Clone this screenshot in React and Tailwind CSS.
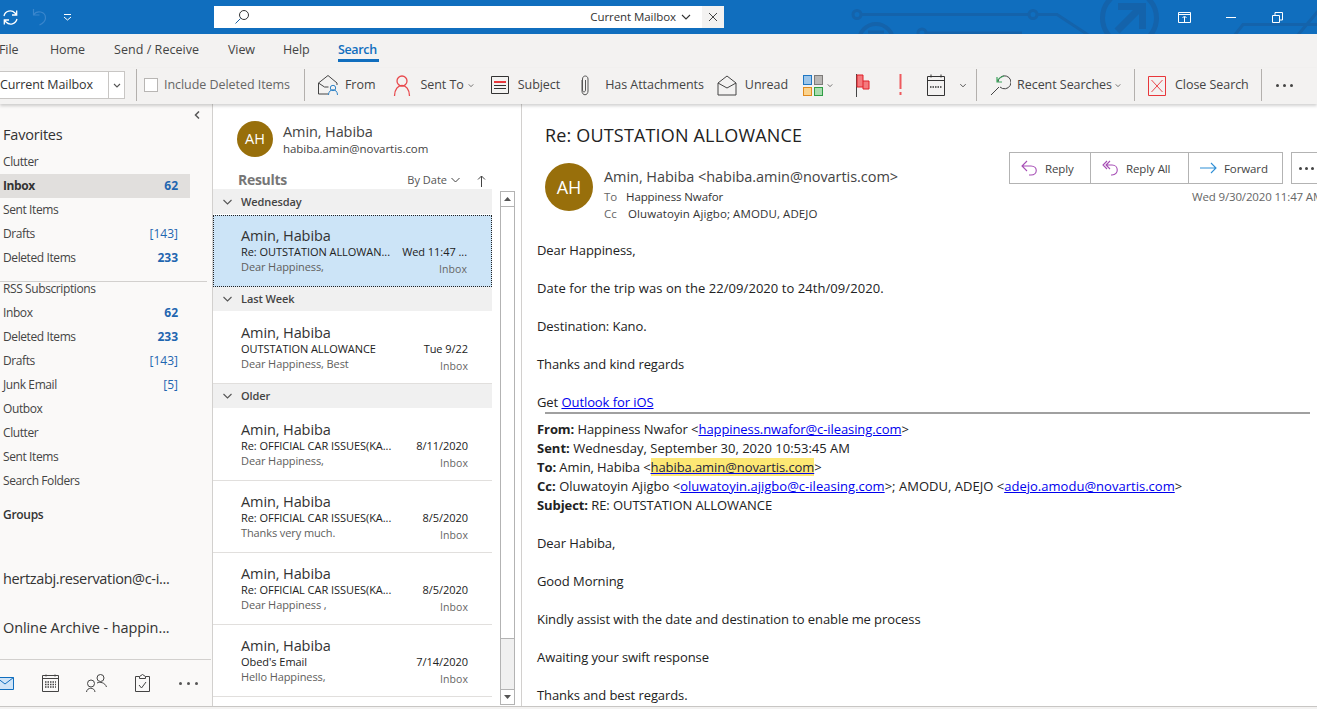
import React from "react";

const F = { fontFamily: '"Open Sans","Noto Sans",sans-serif' };

function Sep() {
  return <div className="w-px h-[32px] bg-[#b3b0ad] shrink-0" />;
}
function Chev({ className = "" }) {
  return (
    <svg width="8" height="5" viewBox="0 0 8 5" className={className} fill="none" stroke="#555" strokeWidth="1.1">
      <path d="M1 1l3 3 3-3" />
    </svg>
  );
}
function RibbonLabel({ children, className = "" }) {
  return <span className={"text-[12.5px] tracking-[-0.05px] text-[#444] whitespace-nowrap " + className}>{children}</span>;
}

function TitleBar() {
  return (
    <div className="relative h-[34px] bg-[#106ebe] flex items-center shrink-0 overflow-hidden">
      <svg className="absolute inset-0" width="1317" height="34" fill="none" stroke="#1463ab" strokeWidth="3">
        <circle cx="857" cy="14.500" r="4" />
        <path d="M861 14.500h168" />
        <circle cx="1033" cy="14.500" r="4" />
        <path d="M1037 14.500h20l32 21" />
        <circle cx="1129.500" cy="18" r="27" strokeWidth="5" />
        <path d="M1117 31l24-24M1118 6.500h24.500V29" strokeWidth="7" />
        <circle cx="876" cy="41" r="17" strokeWidth="4" />
        <path d="M868 32h16" strokeWidth="3" />
        <circle cx="922" cy="33" r="4" />
        <path d="M926 33h96" strokeWidth="3" />
        <path d="M1234 36l9-11.500h74M1297 36l22-26" />
      </svg>
      <svg className="ml-[2px] relative" width="17" height="17" viewBox="0 0 17 17" fill="none" stroke="#fff" strokeWidth="1.3">
        <path d="M2 7a6.500 6.500 0 0 1 11-3l1.500 1.500M15 10a6.500 6.500 0 0 1-11 3l-1.500-1.500M14.700 1.500V6H10M2.300 15.500V11H7" />
      </svg>
      <svg className="ml-[13px] relative" width="15" height="18" viewBox="0 0 15 18" fill="none" stroke="#3a86cc" strokeWidth="1.200">
        <path d="M1.500 1v6h6M1.500 7c3-5 12-4 12 3 0 3-2 5-6 7" />
      </svg>
      <svg className="ml-[16px] relative" width="9" height="7" viewBox="0 0 9 7" fill="none" stroke="#fff" strokeWidth="1">
        <path d="M1 .5h7M1 3l3.500 3L8 3" />
      </svg>
      <div className="relative ml-[142px] w-[510px] h-[22px] bg-white flex items-center">
        <svg className="ml-[20px]" width="16" height="16" viewBox="0 0 16 16" fill="none" stroke="#333" strokeWidth="1">
          <circle cx="10" cy="6" r="4.500" />
          <path d="M6.500 9.500L1.500 14.500" stroke="#1d5f9e" />
        </svg>
        <span className="ml-auto text-[11.5px] tracking-[-0.07px] text-[#333]">Current Mailbox</span>
        <svg className="ml-[5px] mr-[11px]" width="10" height="6" viewBox="0 0 10 6" fill="none" stroke="#333" strokeWidth="1.100">
          <path d="M1 1l4 4 4-4" />
        </svg>
        <div className="w-[22px] h-[22px] bg-[#f3f2f1] flex items-center justify-center">
          <svg width="10" height="10" viewBox="0 0 10 10" stroke="#444" strokeWidth="1">
            <path d="M1 1l8 8M9 1l-8 8" />
          </svg>
        </div>
      </div>
      <div className="relative ml-auto flex items-center mr-[34px]">
        <svg width="14" height="11" viewBox="0 0 14 11" fill="none" stroke="#fff" strokeWidth="1">
          <path d="M.5.500h12v10H.5zM.5 2.500h12M6.500 10V5M4.500 6l2-2 2 2" />
        </svg>
        <div className="ml-[34px] w-[10px] h-px bg-white" />
        <svg className="ml-[36px]" width="11" height="11" viewBox="0 0 11 11" fill="none" stroke="#fff" strokeWidth="1">
          <path d="M.5 3.500h7v7h-7zM3 3V.5h7.500v7.500H8" />
        </svg>
      </div>
    </div>
  );
}

function Tabs() {
  return (
    <div className="h-[34px] flex items-start pt-[7px] text-[12.500px] tracking-[-0.1px] text-[#444] shrink-0 -ml-[1px]">
      <span className="w-[51px]">File</span>
      <span className="w-[64px]">Home</span>
      <span className="w-[114px] tracking-[0.05px]">Send / Receive</span>
      <span className="w-[55px]">View</span>
      <span className="w-[55px]">Help</span>
      <span className="text-[#106ebe] border-b-[3px] border-[#106ebe] h-[21px] w-[41px] font-semibold tracking-[-0.35px] leading-[17px]">Search</span>
    </div>
  );
}

function Ribbon() {
  return (
    <div className="h-[36px] flex items-center shrink-0 shadow-[0_2px_3px_rgba(0,0,0,0.18)] relative z-10 bg-[#f3f2f1] pb-[2px]">
      <div className="w-[125px] h-[28px] bg-white border border-[#c8c6c4] border-l-0 flex items-center shrink-0">
        <span className="text-[12.500px] tracking-[-0.1px] text-[#333] flex-1 whitespace-nowrap overflow-hidden">Current Mailbox</span>
        <div className="w-[16px] h-full border-l border-[#c8c6c4] flex items-center justify-center">
          <Chev />
        </div>
      </div>
      <div className="ml-[11px]"><Sep /></div>
      <div className="ml-[7px] w-[14px] h-[14px] bg-white border border-[#b8b6b4]" />
      <RibbonLabel className="ml-[6px] text-[#666]">Include Deleted Items</RibbonLabel>
      <div className="ml-[14px]"><Sep /></div>
      <svg className="ml-[13px]" width="21" height="22" viewBox="0 0 21 22" fill="none" stroke="#444" strokeWidth="1">
        <path d="M.5 9L10 1.500l9 7.500M.5 9v11h10M19 9v2M.5 9l6 4h4" />
        <circle cx="15" cy="14" r="2.700" stroke="#2f83c7" />
        <path d="M10.500 21c0-7 9-7 9 0" stroke="#2f83c7" />
      </svg>
      <RibbonLabel className="ml-[6px]">From</RibbonLabel>
      <svg className="ml-[18px]" width="18" height="23" viewBox="0 0 18 23" fill="none" stroke="#e8494d" strokeWidth="1.300">
        <circle cx="9" cy="7" r="5" />
        <path d="M1.500 22c0-14 15-14 15 0" />
      </svg>
      <RibbonLabel className="ml-[9px]">Sent To</RibbonLabel>
      <Chev className="ml-[3px] scale-75" />
      <svg className="ml-[16px]" width="19" height="19" viewBox="0 0 19 19" fill="none" stroke="#333" strokeWidth="1">
        <path d="M.5.500h17v17H.5z" />
        <path d="M3 6h12" stroke="#e8373b" strokeWidth="2" />
        <path d="M3 9.500h12M3 12.500h12" />
      </svg>
      <RibbonLabel className="ml-[8px]">Subject</RibbonLabel>
      <svg className="ml-[19px]" width="11" height="21" viewBox="0 0 11 21" fill="none" stroke="#555" strokeWidth="1">
        <path d="M3 5v11c0 5 6 5 6 0V4C9 0 3.500 0 3.500 4v11c0 2.500 3 2.500 3 0V5" />
      </svg>
      <RibbonLabel className="ml-[15px]">Has Attachments</RibbonLabel>
      <svg className="ml-[13px]" width="20" height="21" viewBox="0 0 20 21" fill="none" stroke="#444" strokeWidth="1">
        <path d="M1 8l9-7 9 7v12H1zM1 8l9 5 9-5" />
      </svg>
      <RibbonLabel className="ml-[8px]">Unread</RibbonLabel>
      <svg className="ml-[15px]" width="20" height="22" viewBox="0 0 20 22" strokeWidth="1">
        <rect x=".5" y="1.500" width="8" height="9" fill="#9dc6ea" stroke="#1f77c3" />
        <rect x="11.500" y="1.500" width="8" height="9" fill="#b9b7b5" stroke="#7d7b79" />
        <rect x=".5" y="13.500" width="8" height="8" fill="#fbd38d" stroke="#e08a1e" />
        <rect x="11.500" y="13.500" width="8" height="8" fill="#a8dcae" stroke="#2f9e44" />
      </svg>
      <Chev className="ml-[3px] scale-75" />
      <svg className="ml-[22px]" width="15" height="23" viewBox="0 0 15 23" strokeWidth="1">
        <path d="M.5 0v23" stroke="#444" fill="none" />
        <path d="M1 1h6v6h6v8H7v-2H1z" fill="#f47a7e" stroke="#e01f26" />
        <path d="M7 7v6" stroke="#e01f26" fill="none" />
      </svg>
      <svg className="ml-[28px]" width="4" height="22" viewBox="0 0 4 22" fill="#ee5a5e">
        <rect x=".5" y="0" width="2" height="15" />
        <rect x=".5" y="18" width="2" height="3" />
      </svg>
      <svg className="ml-[24px]" width="18" height="22" viewBox="0 0 18 22" fill="none" stroke="#333" strokeWidth="1">
        <path d="M.5 2.500h17v19H.5zM.5 6.500h17M4 .5v3M14 .5v3" />
        <path d="M3 13h12" strokeWidth="1.500" strokeDasharray="1.500 1" />
      </svg>
      <Chev className="ml-[14px] scale-90" />
      <div className="ml-[9px]"><Sep /></div>
      <svg className="ml-[13px]" width="21" height="22" viewBox="0 0 21 22" fill="none" strokeWidth="1">
        <path d="M8 8a6.500 6.500 0 1 1 2 5" stroke="#444" />
        <path d="M9 13L1 21" stroke="#444" />
        <path d="M7 3v5h5M7 8c1-4 4-5 7-6" stroke="#3da35d" strokeWidth="1.200" />
      </svg>
      <RibbonLabel className="ml-[6px]">Recent Searches</RibbonLabel>
      <Chev className="ml-[2px] scale-75" />
      <div className="ml-[12px]"><Sep /></div>
      <svg className="ml-[13px]" width="18" height="22" viewBox="0 0 18 22" fill="none" stroke="#e8373b" strokeWidth="1">
        <path d="M.5 2.500h17v19H.5z" />
        <path d="M3.500 6l11 12M14.500 6l-11 12" strokeWidth=".9" />
      </svg>
      <RibbonLabel className="ml-[9px]">Close Search</RibbonLabel>
      <div className="ml-[12px]"><Sep /></div>
      <div className="ml-[14px] flex gap-[4px]">
        <span className="w-[3px] h-[3px] rounded-full bg-[#444]" />
        <span className="w-[3px] h-[3px] rounded-full bg-[#444]" />
        <span className="w-[3px] h-[3px] rounded-full bg-[#444]" />
      </div>
    </div>
  );
}

function Folder({ name, count, bold, sel }) {
  return (
    <div className={"h-[24px] flex items-center pl-[3px] pr-[12px] w-[190px] shrink-0 " + (sel ? "bg-[#e1dfdd]" : "")}>
      <span className={"text-[12px] tracking-[-0.4px] flex-1 " + (sel ? "font-bold text-[#333]" : "text-[#444]")}>{name}</span>
      {count ? (
        <span className={"text-[12px] text-[#1f66b0] " + (bold ? "font-bold" : "")}>{count}</span>
      ) : null}
    </div>
  );
}

function Nav() {
  return (
    <div className="w-[213px] bg-[#faf9f8] border-r border-[#d2d0ce] flex flex-col shrink-0 relative">
      <div className="h-[15px] flex items-end justify-end pr-[12px]">
        <svg width="6" height="8" viewBox="0 0 6 8" fill="none" stroke="#555" strokeWidth="1.500">
          <path d="M5 .5L1.500 4 5 7.500" />
        </svg>
      </div>
      <div className="h-[27px] flex items-end pl-[3px] text-[14.500px] tracking-[-0.2px] text-[#333]">Favorites</div>
      <div className="mt-[4px]">
        <Folder name="Clutter" />
        <Folder name="Inbox" count="62" bold sel />
        <Folder name="Sent Items" />
        <Folder name="Drafts" count="[143]" />
        <Folder name="Deleted Items" count="233" bold />
      </div>
      <div className="mt-[11px] h-px w-[207px] bg-[#d2d0ce] shrink-0" />
      <div className="-mt-[5px]">
        <Folder name="RSS Subscriptions" />
        <Folder name="Inbox" count="62" bold />
        <Folder name="Deleted Items" count="233" bold />
        <Folder name="Drafts" count="[143]" />
        <Folder name="Junk Email" count="[5]" />
        <Folder name="Outbox" />
        <Folder name="Clutter" />
        <Folder name="Sent Items" />
        <Folder name="Search Folders" />
      </div>
      <div className="mt-[10px] h-[24px] pl-[3px] flex items-center text-[12px] font-semibold tracking-[-0.3px] text-[#333]">Groups</div>
      <div className="mt-[40px] h-[24px] pl-[3px] flex items-center text-[14.500px] tracking-[-0.35px] text-[#333] whitespace-nowrap">hertzabj.reservation@c-i...</div>
      <div className="mt-[25px] h-[24px] pl-[3px] flex items-center text-[14.500px] tracking-[-0.1px] text-[#333] whitespace-nowrap">Online Archive - happin...</div>
      <div className="mt-auto h-[47px] border-t border-[#d2d0ce] w-[211px] flex items-center relative">
        <svg className="-ml-[4px]" width="18" height="13" viewBox="0 0 18 13" fill="#cfe4f7" stroke="#106ebe" strokeWidth="1">
          <path d="M.5.500h17v12H.5z" />
          <path d="M.5.500L9 7l8.500-6.500" fill="none" />
        </svg>
        <svg className="ml-[27px]" width="19" height="18" viewBox="0 0 19 18" fill="none" stroke="#444" strokeWidth="1">
          <path d="M1.500 1.500h16v16h-16zM1.500 4.500h16M5 .5v2M14 .5v2" />
          <path d="M4 8h11M4 10.500h11M4 13h11" strokeDasharray="1.500 1" strokeWidth="1.300" />
        </svg>
        <svg className="ml-[26px]" width="21" height="18" viewBox="0 0 21 18" fill="none" stroke="#444" strokeWidth="1">
          <circle cx="5" cy="9.500" r="3.500" />
          <path d="M.5 18c.5-5 8-5 8.500 0" />
          <circle cx="14.500" cy="4" r="3.500" />
          <path d="M11 9c3-1.500 8-.5 9.500 4" />
        </svg>
        <svg className="ml-[28px]" width="15" height="18" viewBox="0 0 15 18" fill="none" stroke="#444" strokeWidth="1">
          <path d="M4.500 2.500H.5v15h14v-15h-4M4.500 4.500v-2l3-2 3 2v2z" />
          <path d="M4 11l2.500 3L11 8" />
        </svg>
        <div className="ml-[29px] flex gap-[5px]">
          <span className="w-[3px] h-[3px] rounded-full bg-[#555]" />
          <span className="w-[3px] h-[3px] rounded-full bg-[#555]" />
          <span className="w-[3px] h-[3px] rounded-full bg-[#555]" />
        </div>
      </div>
    </div>
  );
}

function GroupRow({ label, tall }) {
  return (
    <div className={"bg-[#f0f0f0] flex items-center shrink-0 w-[279px] mb-px " + (tall ? "h-[25px] pt-px" : "h-[24px]")}>
      <svg className="ml-[10px]" width="9" height="6" viewBox="0 0 9 6" fill="none" stroke="#555" strokeWidth="1.100">
        <path d="M.5 1l4 4 4-4" />
      </svg>
      <span className="ml-[9px] text-[11px] font-semibold tracking-[-0.1px] text-[#444]">{label}</span>
    </div>
  );
}

function Msg({ subject, date, preview, sel }) {
  return (
    <div
      className={
        "w-[279px] shrink-0 h-[72px] " +
        (sel
          ? "bg-[#cce4f7] border border-dotted border-[#222] -mb-px pl-[27px] pr-[24px] pt-[11px]"
          : "border-b border-[#e1dfdd] pl-[28px] pr-[24px] pt-[12px]")
      }
    >
      <div className="text-[14.500px] leading-[18px] tracking-[-0.1px] text-[#333]">Amin, Habiba</div>
      <div className="-mt-px flex justify-between text-[11px] leading-[15px] text-[#222] tracking-[-0.05px] whitespace-nowrap">
        <span>{subject}</span>
        <span>{date}</span>
      </div>
      <div className="flex justify-between text-[11px] leading-[15px] text-[#666] tracking-[-0.1px]">
        <span className="text-[#605e5c]">{preview}</span>
        <span className="mt-[3px] text-[10.500px] tracking-[0.1px]">Inbox</span>
      </div>
    </div>
  );
}

function ListPane() {
  return (
    <div className="w-[309px] bg-white border-r border-[#d2d0ce] flex flex-col shrink-0 overflow-hidden">
      <div className="flex items-center pl-[24px] h-[36px] mt-[17px] shrink-0">
        <div className="w-[36px] h-[36px] rounded-full bg-[#986f0b] text-white flex items-center justify-center text-[14.500px] shrink-0">AH</div>
        <div className="ml-[10px] pt-[2px]">
          <div className="text-[14.500px] leading-[18px] tracking-[-0.1px] text-[#444]">Amin, Habiba</div>
          <div className="text-[11.500px] leading-[16px] tracking-[-0.05px] text-[#444]">habiba.amin@novartis.com</div>
        </div>
      </div>
      <div className="flex flex-1 min-h-0">
        <div className="w-[279px] flex flex-col shrink-0">
          <div className="h-[32px] flex items-end shrink-0 w-[279px] relative">
            <span className="ml-[25px] text-[14px] font-bold text-[#767676] tracking-[-0.3px] leading-[18px]">Results</span>
            <span className="ml-auto text-[11px] text-[#555] mb-px">By Date</span>
            <svg className="ml-[4px] mb-[6px]" width="9" height="6" viewBox="0 0 9 6" fill="none" stroke="#444" strokeWidth="1">
              <path d="M.5 1l4 4 4-4" />
            </svg>
            <svg className="ml-[17px] mr-[6px] mb-[2px]" width="9" height="12" viewBox="0 0 9 12" fill="none" stroke="#444" strokeWidth="1">
              <path d="M4.500 12V1M1 4.500l3.500-3.500L8 4.500" />
            </svg>
          </div>
          <GroupRow tall label="Wednesday" />
          <Msg sel subject="Re: OUTSTATION ALLOWAN..." date="Wed 11:47 ..." preview="Dear Happiness," />
          <div className="h-px shrink-0" />
          <GroupRow label="Last Week" />
          <Msg subject="OUTSTATION ALLOWANCE" date="Tue 9/22" preview="Dear Happiness,  Best" />
          <GroupRow label="Older" />
          <Msg subject="Re: OFFICIAL CAR ISSUES(KA..." date="8/11/2020" preview="Dear Happiness," />
          <Msg subject="Re: OFFICIAL CAR ISSUES(KA..." date="8/5/2020" preview="Thanks very much." />
          <Msg subject="Re: OFFICIAL CAR ISSUES(KA..." date="8/5/2020" preview="Dear Happiness ," />
          <Msg subject="Obed's Email" date="7/14/2020" preview="Hello Happiness," />
        </div>
        <div className="ml-[8px] w-[15px] mt-[34px] mb-px bg-[#f0f0f0] border border-[#b3b3b3] flex flex-col shrink-0">
          <div className="h-[15px] bg-white border-b border-[#b3b3b3] flex items-center justify-center shrink-0">
            <svg width="7" height="4" viewBox="0 0 7 4" fill="#555"><path d="M0 4l3.500-4L7 4z" /></svg>
          </div>
          <div className="h-[432px] bg-white border-b border-[#b3b3b3] shrink-0" />
          <div className="mt-auto h-[15px] bg-white border-t border-[#b3b3b3] flex items-center justify-center shrink-0">
            <svg width="7" height="4" viewBox="0 0 7 4" fill="#555"><path d="M0 0l3.500 4L7 0z" /></svg>
          </div>
        </div>
      </div>
    </div>
  );
}

const A = ({ children }) => <a className="text-[#0000ee] underline">{children}</a>;

function ActionBtn({ icon, label, w, last }) {
  return (
    <div className={"h-full flex items-center pl-[11px] " + (last ? "" : "border-r border-[#b3b3b3]")} style={{ width: w }}>
      {icon}
      <span className="ml-[7px] pt-px text-[11.500px] tracking-[-0.1px] text-[#444]">{label}</span>
    </div>
  );
}

function Reading() {
  return (
    <div className="flex-1 bg-white overflow-hidden relative min-w-0">
      <div className="absolute left-[487px] top-[48px] flex items-start">
        <div className="w-[274px] h-[32px] border border-[#b3b3b3] flex items-center bg-white shrink-0">
          <ActionBtn
            w={81}
            label="Reply"
            icon={
              <svg width="17" height="18" viewBox="0 0 17 18" fill="none" stroke="#a64db5" strokeWidth="1.100">
                <path d="M6 2L1 7l5 5M1 7h9c7 0 7 9 0 9H8" />
              </svg>
            }
          />
          <ActionBtn
            w={98}
            label="Reply All"
            icon={
              <svg width="17" height="18" viewBox="0 0 17 18" fill="none" stroke="#a64db5" strokeWidth="1.100">
                <path d="M5 2L1 6l4 4M8 2L4 6l4 4M4 6h6c7 0 7 10 0 10H9" />
              </svg>
            }
          />
          <ActionBtn
            w={93}
            last
            label="Forward"
            icon={
              <svg width="17" height="12" viewBox="0 0 17 12" fill="none" stroke="#2f8fd6" strokeWidth="1.100">
                <path d="M0 6h16M11 1l5 5-5 5" />
              </svg>
            }
          />
        </div>
        <div className="ml-[8px] w-[40px] h-[32px] border border-[#b3b3b3] flex items-center pl-[7px] gap-[3px] shrink-0">
          <span className="w-[3px] h-[3px] rounded-full bg-[#444]" />
          <span className="w-[3px] h-[3px] rounded-full bg-[#444]" />
          <span className="w-[3px] h-[3px] rounded-full bg-[#444]" />
        </div>
      </div>
      <div className="absolute left-[670px] top-[84px] text-[11.500px] tracking-[-0.15px] text-[#666] whitespace-nowrap">Wed 9/30/2020 11:47 AM</div>

      <div className="pl-[23px] pt-[18px] text-[18px] leading-[26px] tracking-[0.17px] text-[#222]">Re: OUTSTATION ALLOWANCE</div>
      <div className="pl-[23px] mt-[15px] flex h-[48px]">
        <div className="w-[48px] h-[48px] rounded-full bg-[#986f0b] text-white flex items-center justify-center text-[18px] shrink-0">AH</div>
        <div className="ml-[11px] mt-[4px]">
          <div className="text-[14.500px] leading-[20px] tracking-[-0.05px] text-[#444]">Amin, Habiba &lt;habiba.amin@novartis.com&gt;</div>
          <div className="text-[11.500px] leading-[16px] mt-[2px] text-[#333] tracking-[-0.1px]">
            <span className="text-[#666] inline-block w-[22px]">To</span>Happiness Nwafor
          </div>
          <div className="text-[11.500px] leading-[16px] mt-[1px] text-[#333] tracking-[0.1px]">
            <span className="text-[#666] inline-block w-[24px]">Cc</span>Oluwatoyin Ajigbo; AMODU, ADEJO
          </div>
        </div>
      </div>

      <div className="pl-[15px] mt-[30px] text-[13px] leading-[19px] tracking-[-0.08px] text-[#222] whitespace-nowrap">
        <p>Dear Happiness,</p>
        <p>&nbsp;</p>
        <p className="tracking-[0.06px]">Date for the trip was on the 22/09/2020 to 24th/09/2020.</p>
        <p>&nbsp;</p>
        <p>Destination: Kano.</p>
        <p>&nbsp;</p>
        <p>Thanks and kind regards</p>
        <p>&nbsp;</p>
        <p>Get <A>Outlook for iOS</A></p>
        <div className="ml-[8px] w-[765px] h-[2px] bg-[#a0a0a0] mb-[6px]" />
        <p><b>From:</b> Happiness Nwafor &lt;<A>happiness.nwafor@c-ileasing.com</A>&gt;</p>
        <p className="tracking-[0px]"><b>Sent:</b> Wednesday, September 30, 2020 10:53:45 AM</p>
        <p><b>To:</b> Amin, Habiba &lt;<span className="bg-[#fde874] text-[#1f1f3a] underline decoration-[#0000ee]">habiba.amin@novartis.com</span>&gt;</p>
        <p className="tracking-[0.02px]"><b>Cc:</b> Oluwatoyin Ajigbo &lt;<A>oluwatoyin.ajigbo@c-ileasing.com</A>&gt;; AMODU, ADEJO &lt;<A>adejo.amodu@novartis.com</A>&gt;</p>
        <p><b>Subject:</b> RE: OUTSTATION ALLOWANCE</p>
        <p>&nbsp;</p>
        <p>Dear Habiba,</p>
        <p>&nbsp;</p>
        <p>Good Morning</p>
        <p>&nbsp;</p>
        <p>Kindly assist with the date and destination to enable me process</p>
        <p>&nbsp;</p>
        <p>Awaiting your swift response</p>
        <p>&nbsp;</p>
        <p>Thanks and best regards.</p>
      </div>
    </div>
  );
}

export default function App() {
  return (
    <div style={F} className="w-[1317px] h-[709px] overflow-hidden flex flex-col bg-[#f3f2f1]">
      <TitleBar />
      <Tabs />
      <Ribbon />
      <div className="flex-1 min-h-0 flex mb-[2px] border-b border-[#c8c6c4]">
        <Nav />
        <ListPane />
        <Reading />
      </div>
    </div>
  );
}
